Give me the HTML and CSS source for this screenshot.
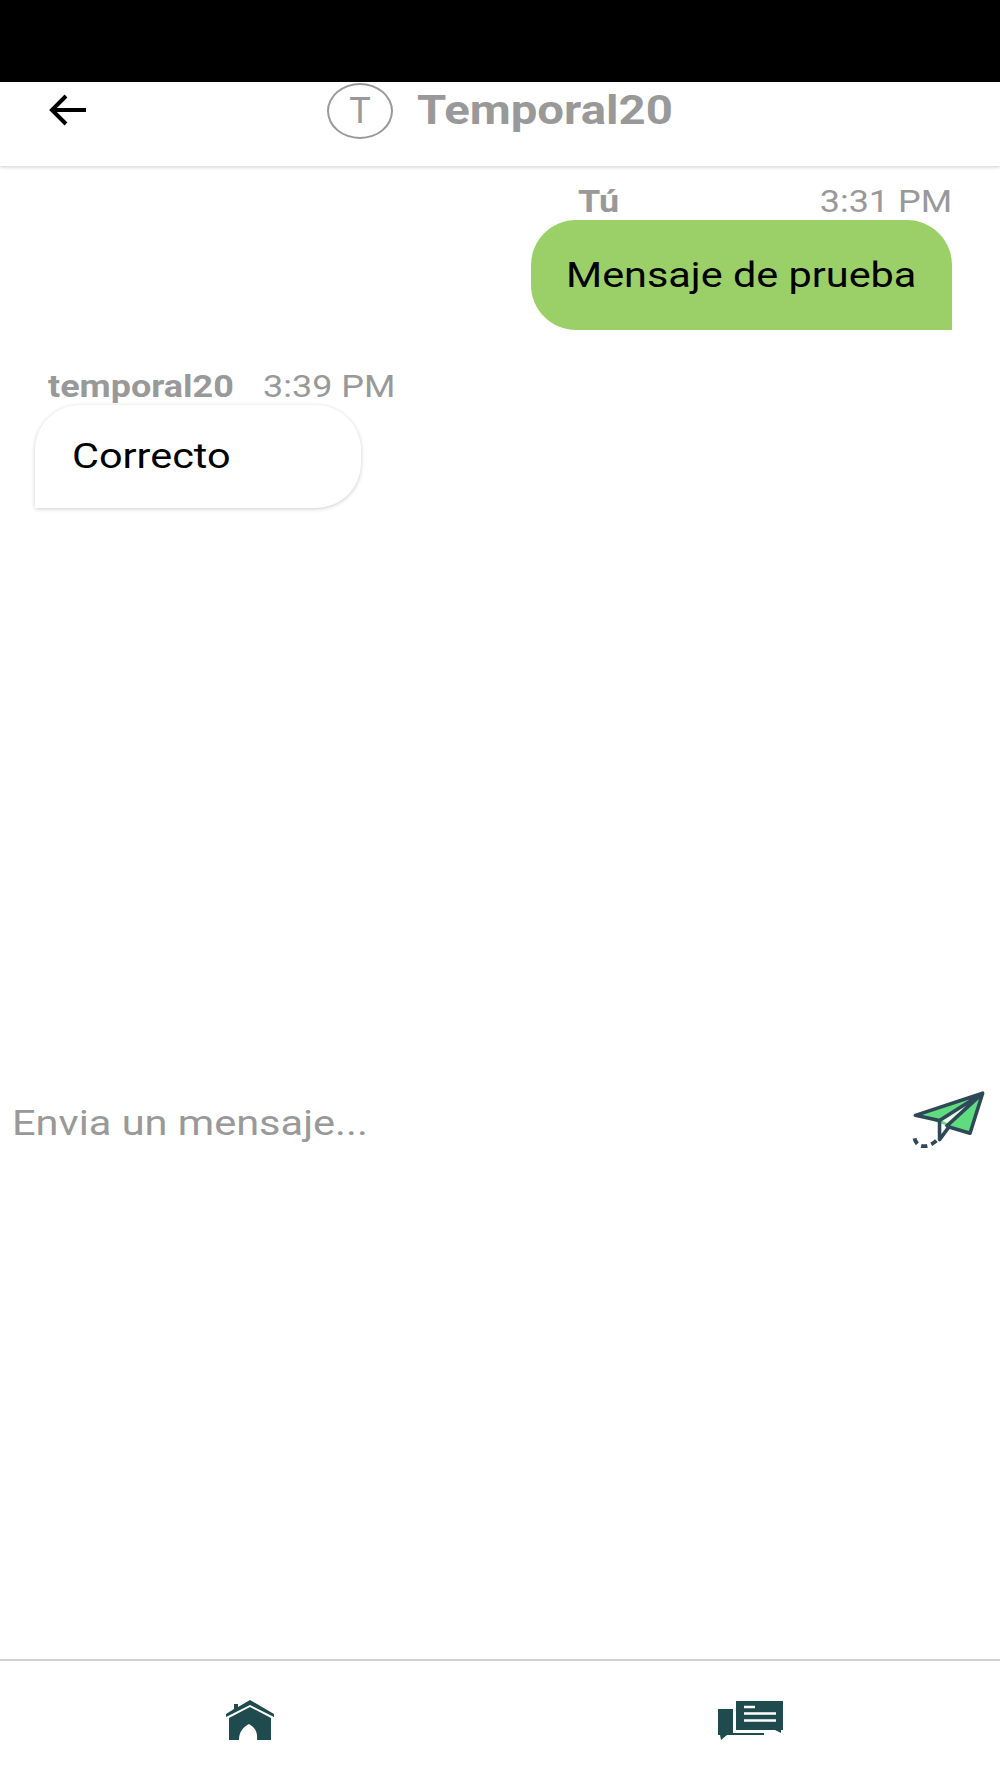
FILE: index.html
```html
<!DOCTYPE html>
<html lang="en">
<head>
    <meta charset="UTF-8">
    <meta name="viewport" content="width=device-width, initial-scale=1.0">
    <title>Temporal20</title>
    <link rel="stylesheet" href="styles.css">
</head>
<body>

    <div class="status-bar"></div>

    <header class="chat-header">
        <svg class="back-icon" viewBox="0 0 40 34" width="40" height="34">
            <path d="M38 17H4M18 3 4 17l14 14" fill="none" stroke="#000" stroke-width="4"/>
        </svg>
        <div class="avatar">T</div>
        <div class="chat-title wide">Temporal20</div>
    </header>

    <main class="messages">
        <div class="message sent">
            <div class="meta">
                <span class="author wide">Tú</span>
                <span class="time wide">3:31 PM</span>
            </div>
            <div class="bubble"><span class="wide">Mensaje de prueba</span></div>
        </div>
        <div class="message received">
            <div class="meta">
                <span class="author wide">temporal20</span>
                <span class="time wide">3:39 PM</span>
            </div>
            <div class="bubble"><span class="wide">Correcto</span></div>
        </div>
    </main>

    <div class="composer">
        <span class="placeholder wide">Envia un mensaje...</span>
        <svg class="send-icon" viewBox="20 14 78 56" width="82" height="59" preserveAspectRatio="none">
            <path d="M27 39 91 18 79 56 52 47Z" fill="#5fdc7f"/>
            <path d="M78 27 52 44 58 47Z" fill="#e9fbe9"/>
            <path d="M27 39 91 18 79 56 59 50 50 62V44ZM91 18 50 44M91 18 56 50" fill="none" stroke="#2f4858" stroke-width="3.4" stroke-linejoin="round"/>
            <path d="M47 63Q38 71 30 67 26 64 26 58" fill="none" stroke="#2f4858" stroke-width="3.8" stroke-dasharray="6 4"/>
        </svg>
    </div>

    <nav class="bottom-nav">
        <svg class="home-icon" viewBox="14 18 52 42" width="54" height="42">
            <path d="M16 33 24 28V23h4v3L40 19 64 33V36L40 24 16 36Z" fill="#1f4b4f"/>
            <path d="M19 37 40 26 61 37V59H47C48 50 44 46 39 43 33 46 29 51 29 59H19Z" fill="#1f4b4f"/>
        </svg>
        <svg class="chat-icon" viewBox="4 18 72 44" width="72" height="44">
            <path d="M26 21H73V50H71L71 53 65 50H26Z" fill="#1f4b4f"/>
            <path d="M8 29H23V53H54V55H17L11 60 10 55H8Z" fill="#1f4b4f"/>
            <path d="M34 27H45M34 33.500H66M34 40.500H66" stroke="#fff" stroke-width="2.4" fill="none"/>
        </svg>
    </nav>

</body>
</html>
```

FILE: styles.css
```css
body {
    font-family: Roboto, sans-serif;
    display: flex;
    flex-direction: column;
    height: 1778px;
    margin: 0;
    background-color: #fff;
    overflow: hidden;
}
/* the capture is stretched sideways, so the text is too */
.wide {
    display: inline-block;
    transform: scaleX(1.16);
    transform-origin: left center;
}
.status-bar {
    height: 82px;
    background: #000;
}
.chat-header {
    display: flex;
    align-items: flex-start;
    height: 84px;
    background: #fff;
    box-shadow: 0 1px 4px rgba(0, 0, 0, 0.2);
    z-index: 1;
}
.back-icon {
    margin: 11px 0 0 48px;
}
.avatar {
    box-sizing: border-box;
    width: 66px;
    height: 56px;
    margin: 1px 0 0 239px;
    border: 2px solid #999;
    border-radius: 50%;
    color: #999;
    font-size: 36px;
    line-height: 52px;
    text-align: center;
}
.chat-title {
    margin: 4px 0 0 24px;
    color: #999;
    font-size: 40.800px;
    font-weight: 700;
    line-height: 48px;
}
.messages {
    display: flex;
    flex-direction: column;
    gap: 38px;
    height: 922px;
    padding-top: 16px;
    box-sizing: border-box;
}
.message {
    display: flex;
    flex-direction: column;
}
.meta {
    display: flex;
    justify-content: space-between;
    color: #999;
    font-size: 31px;
    line-height: 37px;
}
.sent .time {
    transform-origin: right center;
}
.author {
    font-weight: 700;
}
.bubble {
    box-sizing: border-box;
    color: #000;
    font-size: 35.700px;
    border-radius: 45px;
}
.sent {
    align-self: flex-end;
    width: 421px;
    margin-right: 48px;
}
.sent .meta {
    padding: 1px 0 0 47px;
}
.sent .bubble {
    height: 110px;
    padding: 34px 0 0 35px;
    background: #9bd069;
    border-bottom-right-radius: 0;
}
.received {
    align-self: flex-start;
    width: 326px;
    margin-left: 35px;
}
.received .meta {
    justify-content: flex-start;
    gap: 55px;
    padding-left: 13px;
    white-space: nowrap;
}
.received .bubble {
    height: 103px;
    padding: 30px 0 0 37px;
    background: #fff;
    border-bottom-left-radius: 0;
    box-shadow: 0 1px 4px rgba(0, 0, 0, 0.2);
}
.composer {
    display: flex;
    align-items: center;
    justify-content: space-between;
    height: 60px;
    padding: 0 10px 0 12px;
}
.placeholder {
    margin-top: 10px;
    color: #999;
    font-size: 35.800px;
}
.bottom-nav {
    display: grid;
    grid-template-columns: 1fr 1fr;
    align-items: center;
    justify-items: center;
    height: 117px;
    margin-top: auto;
    border-top: 2px solid #d0d0d0;
}
```
